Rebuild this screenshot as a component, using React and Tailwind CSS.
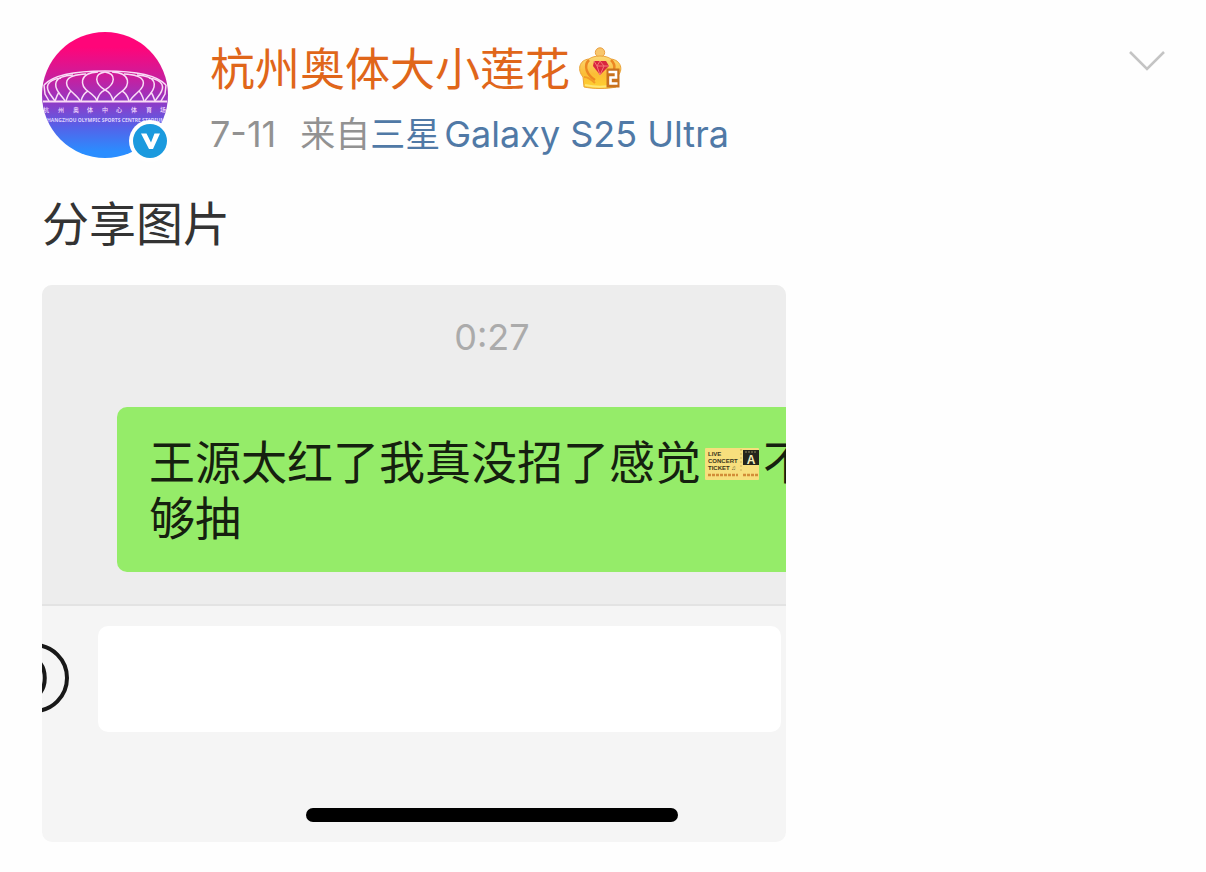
const VENUE_NAME = [
  { char: '杭', x: 4 },
  { char: '州', x: 19 },
  { char: '奥', x: 34 },
  { char: '体', x: 48 },
  { char: '中', x: 63 },
  { char: '心', x: 77 },
  { char: '体', x: 92 },
  { char: '育', x: 107 },
  { char: '场', x: 121 },
]

// left half of the roof, mirrored for the right half
const PETALS = [
  'M63 40 C51 42 53 52 63 58 C58 60 56 64 55 69',
  'M56 40 C36 41 38 54 47 60 C51 63 54 65 55 69',
  'M46 59 C42 61 40 65 39 69',
  'M44 42 C20 43 22 53 30 60 C34 64 37 66 38 69',
  'M29 59 C26 62 25 66 24 69',
  'M31 43 C10 44 12 54 17 61 C20 65 22 67 23 69',
  'M17 60 C15 63 14 66 13 69',
  'M19 46 C3 48 4 56 8 62 L13 69',
  'M2 53 L3 62 L7 69',
]

const Petals = () => PETALS.map((d) => <path key={d} d={d} />)

const Stadium = () => (
  <svg viewBox="0 0 126 126" className="size-full rounded-full" aria-hidden="true">
    <defs>
      <linearGradient id="sky" x1="0" y1="0" x2="0" y2="1">
        <stop offset="0.12" stopColor="#ff0579" />
        <stop offset="0.34" stopColor="#cf1b99" />
        <stop offset="0.55" stopColor="#9238c4" />
        <stop offset="0.75" stopColor="#5661e8" />
        <stop offset="0.95" stopColor="#2a8dff" />
      </linearGradient>
    </defs>
    <rect width="126" height="126" fill="url(#sky)" />
    <g fill="none" stroke="#f9dcf6" strokeWidth="1.5">
      <path d="M2 53 C10 44 32 39 63 39 C94 39 116 44 124 53" />
      <Petals />
      <g transform="translate(126 0) scale(-1 1)">
        <Petals />
      </g>
      <path d="M1 69.500H125" strokeWidth="1.800" />
    </g>
    <g fill="#f3dcff" fontFamily="'Noto Sans CJK SC', sans-serif" fontSize="6" fontWeight="500" textAnchor="middle">
      {VENUE_NAME.map(({ char, x }) => (
        <text key={x} x={x} y="80">{char}</text>
      ))}
    </g>
    <text x="64" y="90" fill="#dcd2ff" fontFamily="'Noto Sans', sans-serif" fontSize="5" fontWeight="700" textAnchor="middle">
      HANGZHOU OLYMPIC SPORTS CENTRE STADIUM
    </text>
  </svg>
)

const VerifiedBadge = () => (
  <svg viewBox="0 0 42 42" className="absolute -right-[3px] -bottom-[4px] size-[42px]" role="img" aria-label="Verified">
    <circle cx="21" cy="21" r="21" fill="#fff" />
    <circle cx="21" cy="21" r="17" fill="#1b9ade" />
    <path d="M12 13.500h5.500l4.500 9 3.500-9H31L24 29h-4z" fill="#fff" />
  </svg>
)

const Crown = () => (
  <svg viewBox="0 0 44 44" className="mb-1 size-11 shrink-0" role="img" aria-label="Level 2">
    <defs>
      <linearGradient id="gold" x1="0" y1="0" x2="0" y2="1">
        <stop offset="0" stopColor="#fbd878" />
        <stop offset="0.55" stopColor="#fbbd36" />
        <stop offset="1" stopColor="#ffd22f" />
      </linearGradient>
    </defs>
    <circle cx="22" cy="6.500" r="4.700" fill="#f8c66b" stroke="#e9a044" />
    <path d="M6 41 L5 31 C-1 24 1 14 11 13 C16 9 28 9 33 13 C43 14 46 24 39 31 L38 41 C28 43 16 43 6 41z" fill="url(#gold)" stroke="#eaa33a" />
    <path d="M11 14 C5 20 9 29 17 34 M33 14 C39 20 36 25 32 30" fill="none" stroke="#ec8722" strokeWidth="2.500" />
    <path d="M6 31 C11 31 14 34 17 37" fill="none" stroke="#f39a25" strokeWidth="2" />
    <path d="M7 39 C16 41 28 41 36 39" fill="none" stroke="#ffe574" strokeWidth="2" />
    <path d="M16 15h12l3 5-9 9-7-9z" fill="#d9253f" />
    <path d="M16 15l3 5h12M19 20l3 9 4-9-4-5-3 5" fill="none" stroke="#f37876" />
    <path d="M28.500 22.500h13v19h-13z" fill="#c9721e" />
    <path d="M30.500 26h7.500v5.500h-5.500v6h7" fill="none" stroke="#fff" strokeWidth="2.600" />
  </svg>
)

const Ticket = () => (
  <svg viewBox="0 0 54 32" className="mx-1 inline-block h-8 w-[54px] align-[-1px]" role="img" aria-label="Live concert ticket">
    <rect width="54" height="32" rx="1" fill="#f7df7d" />
    <g fill="#39351b" fontFamily="'Liberation Sans', sans-serif" fontWeight="700" fontSize="6">
      <text x="3" y="8">LIVE</text>
      <text x="3" y="15">CONCERT</text>
      <text x="3" y="22">TICKET ♫</text>
    </g>
    <rect x="38" y="2" width="16" height="15" fill="#25251c" />
    <text x="46" y="16" fill="#f7efbb" fontFamily="'Liberation Sans', sans-serif" fontWeight="700" fontSize="12" textAnchor="middle">A</text>
    <path d="M40 4h12" stroke="#8d875a" strokeDasharray="2 1" />
    <path d="M36 1v24" stroke="#c9af58" strokeDasharray="2 2" />
    <path d="M3 27h30M38 27h15" stroke="#d28d38" strokeWidth="2.500" strokeDasharray="3 1" />
  </svg>
)

const PostHeader = () => (
  <header className="flex items-start">
    <a href="#profile" aria-label="杭州奥体大小莲花" className="relative block size-[126px] shrink-0">
      <Stadium />
      <VerifiedBadge />
    </a>

    <div className="ml-[42px] min-w-0 flex-1 pt-2">
      <div className="flex items-center gap-2">
        <a href="#profile" className="text-[45px] leading-[60px] text-[#e0661a]">杭州奥体大小莲花</a>
        <Crown />
      </div>
      <p className="mt-2 flex text-4xl leading-[52px] whitespace-nowrap text-[#929292]">
        <time>7-11</time>
        <span className="ml-6 text-[35px] leading-[52px]">来自</span>
        <a href="#device" className="flex gap-1 text-[#5079a6]">
          <span className="text-[35px] leading-[52px]">三星</span>
          <span>Galaxy S25 Ultra</span>
        </a>
      </p>
    </div>

    <button type="button" aria-label="More" className="mt-4 shrink-0">
      <svg viewBox="0 0 38 26" className="h-[26px] w-[38px]" fill="none" stroke="#c4c4c4" strokeWidth="2.500">
        <path d="M2 4 L19 21 L36 4" />
      </svg>
    </button>
  </header>
)

const ChatPicture = () => (
  <figure className="mt-7 w-full max-w-[744px] overflow-hidden rounded-[10px] bg-[#f5f5f5]">
    <div className="border-b-2 border-[#e3e3e3] bg-[#ededed] pt-[26px] pb-8">
      <time className="block pl-[156px] text-center text-4xl leading-[52px] text-[#ababab]">0:27</time>
      <p className="mt-11 ml-[75px] overflow-hidden rounded-l-[10px] bg-[#95ec69] pt-[27px] pb-[26px] pl-8 text-[46px] leading-[56px] whitespace-nowrap text-[#15200f]">
        王源太红了我真没招了感觉
        <Ticket />
        不
        <br />
        够抽
      </p>
    </div>

    <div className="flex items-center pt-5 pr-[5px]">
      <button type="button" aria-label="Voice message" className="w-14 shrink-0">
        <svg viewBox="0 0 56 80" className="h-20 w-14" fill="none" stroke="#181818" strokeWidth="4">
          <circle cx="-8" cy="39" r="33" />
          <path d="M-4 22 C5 30 5 48 -4 56" />
        </svg>
      </button>
      <input type="text" aria-label="Message" className="h-[106px] min-w-0 flex-1 rounded-[10px] bg-white px-6 text-4xl outline-none" />
    </div>

    <div className="flex justify-center pt-[76px] pb-5 pl-[156px]">
      <div className="h-3.5 w-[372px] max-w-full rounded-full bg-black" />
    </div>
  </figure>
)

export default function App() {
  return (
    <main className="min-h-screen bg-[#fefefe] font-['Inter','Noto_Sans_CJK_SC',sans-serif]">
      <article className="pt-8 pr-10 pb-[30px] pl-[42px]">
        <PostHeader />
        <p className="mt-[31px] text-[47px] leading-[66px] text-[#333]">分享图片</p>
        <ChatPicture />
      </article>
    </main>
  )
}
